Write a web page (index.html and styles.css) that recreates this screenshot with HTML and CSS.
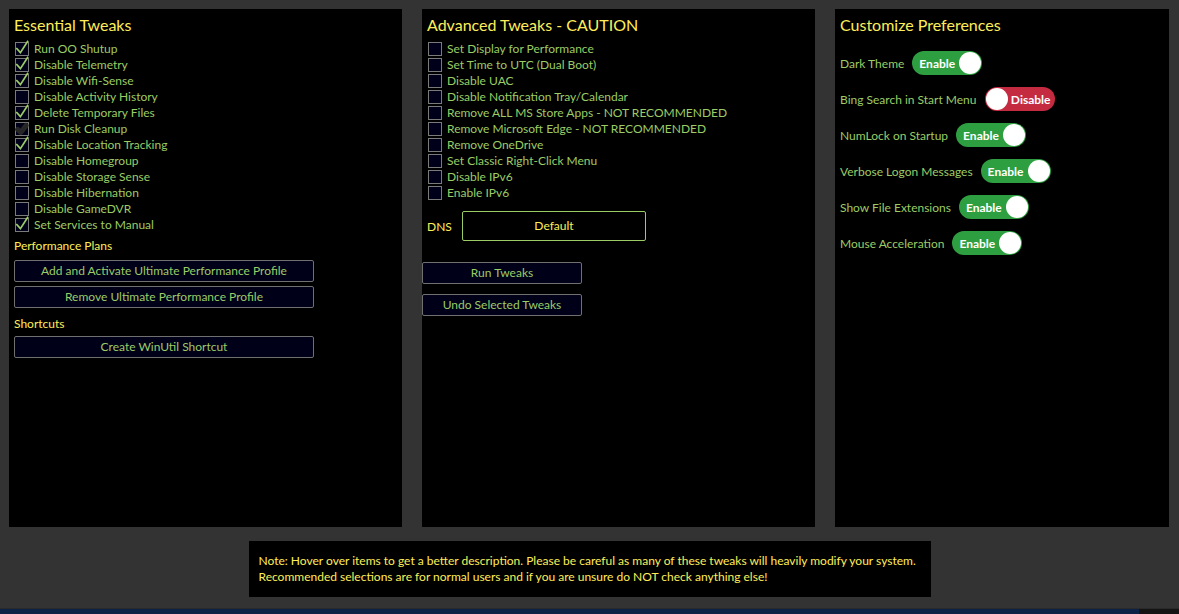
FILE: index.html
```html
<!DOCTYPE html>
<html lang="en">
<head>
<meta charset="utf-8">
<title>WinUtil Tweaks</title>
<link rel="stylesheet" href="styles.css">
</head>
<body>
<div class="app">
  <main class="panels">
    <section class="panel">
      <h2 class="title">Essential Tweaks</h2>
      <ul class="checks">
        <li class="check"><span class="box"><svg class="mark" viewBox="0 0 14 14"><path d="M1.8 6.6 L5.4 10.6 L12.6 -0.6"/></svg></span>Run OO Shutup</li>
        <li class="check"><span class="box"><svg class="mark" viewBox="0 0 14 14"><path d="M1.8 6.6 L5.4 10.6 L12.6 -0.6"/></svg></span>Disable Telemetry</li>
        <li class="check"><span class="box"><svg class="mark" viewBox="0 0 14 14"><path d="M1.8 6.6 L5.4 10.6 L12.6 -0.6"/></svg></span>Disable Wifi-Sense</li>
        <li class="check"><span class="box"></span>Disable Activity History</li>
        <li class="check"><span class="box"><svg class="mark" viewBox="0 0 14 14"><path d="M1.8 6.6 L5.4 10.6 L12.6 -0.6"/></svg></span>Delete Temporary Files</li>
        <li class="check"><span class="box"><svg class="mark dim" viewBox="0 0 14 14"><path d="M2.6 7.4 L5.8 10.4 L11.2 3.4"/></svg></span>Run Disk Cleanup</li>
        <li class="check"><span class="box"><svg class="mark" viewBox="0 0 14 14"><path d="M1.8 6.6 L5.4 10.6 L12.6 -0.6"/></svg></span>Disable Location Tracking</li>
        <li class="check"><span class="box"></span>Disable Homegroup</li>
        <li class="check"><span class="box"></span>Disable Storage Sense</li>
        <li class="check"><span class="box"></span>Disable Hibernation</li>
        <li class="check"><span class="box"></span>Disable GameDVR</li>
        <li class="check"><span class="box"><svg class="mark" viewBox="0 0 14 14"><path d="M1.8 6.6 L5.4 10.6 L12.6 -0.6"/></svg></span>Set Services to Manual</li>
      </ul>
      <h3 class="label plans">Performance Plans</h3>
      <button class="btn wide first">Add and Activate Ultimate Performance Profile</button>
      <button class="btn wide">Remove Ultimate Performance Profile</button>
      <h3 class="label shortcuts">Shortcuts</h3>
      <button class="btn wide first">Create WinUtil Shortcut</button>
    </section>

    <section class="panel">
      <h2 class="title">Advanced Tweaks - CAUTION</h2>
      <ul class="checks">
        <li class="check"><span class="box"></span>Set Display for Performance</li>
        <li class="check"><span class="box"></span>Set Time to UTC (Dual Boot)</li>
        <li class="check"><span class="box"></span>Disable UAC</li>
        <li class="check"><span class="box"></span>Disable Notification Tray/Calendar</li>
        <li class="check"><span class="box"></span>Remove ALL MS Store Apps - NOT RECOMMENDED</li>
        <li class="check"><span class="box"></span>Remove Microsoft Edge - NOT RECOMMENDED</li>
        <li class="check"><span class="box"></span>Remove OneDrive</li>
        <li class="check"><span class="box"></span>Set Classic Right-Click Menu</li>
        <li class="check"><span class="box"></span>Disable IPv6</li>
        <li class="check"><span class="box"></span>Enable IPv6</li>
      </ul>
      <div class="dns">
        <span class="dns-label">DNS</span>
        <div class="combo">Default</div>
      </div>
      <div class="actions">
        <button class="btn small">Run Tweaks</button>
        <button class="btn small">Undo Selected Tweaks</button>
      </div>
    </section>

    <section class="panel">
      <h2 class="title">Customize Preferences</h2>
      <ul class="prefs">
        <li class="pref">Dark Theme<span class="toggle on">Enable<span class="knob"></span></span></li>
        <li class="pref">Bing Search in Start Menu<span class="toggle off"><span class="knob"></span>Disable</span></li>
        <li class="pref">NumLock on Startup<span class="toggle on">Enable<span class="knob"></span></span></li>
        <li class="pref">Verbose Logon Messages<span class="toggle on">Enable<span class="knob"></span></span></li>
        <li class="pref">Show File Extensions<span class="toggle on">Enable<span class="knob"></span></span></li>
        <li class="pref">Mouse Acceleration<span class="toggle on">Enable<span class="knob"></span></span></li>
      </ul>
    </section>
  </main>

  <footer class="foot">
    <p class="note">Note: Hover over items to get a better description. Please be careful as many of these tweaks will heavily modify your system.<br>Recommended selections are for normal users and if you are unsure do NOT check anything else!</p>
  </footer>

  <div class="taskbar"><span class="tb-blue"></span><span class="tb-dark"></span></div>
</div>
</body>
</html>
```

FILE: styles.css
```css
* { box-sizing: border-box; }

html, body {
  margin: 0;
  padding: 0;
  background: #333333;
}

body {
  font-family: Lato, "Open Sans", sans-serif;
  font-size: 12px;
  color: #9ccc65;
}

.app {
  width: 1179px;
  height: 614px;
  display: flex;
  flex-direction: column;
  overflow: hidden;
}

.panels {
  display: grid;
  grid-template-columns: 393px 393px 334px;
  column-gap: 20px;
  padding: 9px 0 0 9px;
  height: 527px;
}

.panel {
  background: #000000;
  padding: 5px 5px 0 5px;
  display: flex;
  flex-direction: column;
  align-items: flex-start;
}

.title {
  margin: 0 0 5px 0;
  font-size: 16px;
  font-weight: normal;
  line-height: 22px;
  color: #ffee58;
}

.checks, .prefs {
  list-style: none;
  margin: 0;
  padding: 0;
}

.check {
  display: flex;
  align-items: center;
  height: 16px;
  line-height: 16px;
  white-space: nowrap;
  gap: 5px;
}

.box {
  position: relative;
  width: 14px;
  height: 14px;
  margin-left: 1px;
  border: 1px solid #7a7a7a;
  background: #00001a;
  flex: none;
}

.mark {
  position: absolute;
  left: -1px;
  top: -1px;
  width: 14px;
  height: 14px;
  overflow: visible;
}

.mark path {
  fill: none;
  stroke: #9ccc65;
  stroke-width: 1.7;
  stroke-linecap: square;
  stroke-linejoin: miter;
}

.mark.dim path {
  stroke: #262626;
  stroke-width: 5;
  stroke-linecap: round;
  stroke-linejoin: round;
}

.label {
  margin: 0;
  font-size: 12px;
  font-weight: normal;
  line-height: 16px;
  color: #ffee58;
}

.plans { margin-top: 5px; }
.shortcuts { margin-top: 8px; }

.btn {
  display: block;
  height: 22px;
  padding: 0;
  border: 1px solid #707070;
  border-radius: 2px;
  background: #000019;
  color: #9ccc65;
  font-family: inherit;
  font-size: 12px;
  line-height: 20px;
  text-align: center;
}

.btn.wide {
  width: 300px;
  margin-top: 4px;
}

.btn.wide.first { margin-top: 6px; }
.shortcuts + .btn.wide.first { margin-top: 4px; }

.dns {
  display: flex;
  align-items: center;
  margin-top: 10px;
}

.dns-label {
  width: 35px;
  color: #ffee58;
}

.combo {
  width: 184px;
  height: 30px;
  border: 1px solid #9ccc65;
  border-radius: 2px;
  background: #000000;
  color: #ffee58;
  line-height: 28px;
  text-align: center;
}

.actions {
  display: flex;
  flex-direction: column;
  gap: 10px;
  margin: 21px 0 0 -5px;
}

.btn.small { width: 160px; }

.prefs {
  margin-top: 10px;
  display: flex;
  flex-direction: column;
  gap: 12px;
}

.pref {
  display: flex;
  align-items: center;
  height: 24px;
  gap: 8px;
  white-space: nowrap;
}

.toggle {
  display: flex;
  align-items: center;
  justify-content: space-between;
  width: 70px;
  height: 24px;
  border-radius: 12px;
  color: #ffffff;
  font-weight: bold;
  font-size: 12px;
}

.toggle.on {
  background: #2e9f40;
  padding: 0 1px 0 7px;
}

.toggle.off {
  background: #c42a40;
  padding: 0 4px 0 1px;
}

.knob {
  width: 22px;
  height: 22px;
  border-radius: 50%;
  background: #ffffff;
}

.foot {
  flex: 1;
  display: flex;
  justify-content: center;
  align-items: flex-start;
  padding-top: 14px;
}

.note {
  margin: 0;
  width: 682px;
  height: 56px;
  padding: 12px 10px 0 10px;
  background: #000000;
  color: #ffee58;
  line-height: 16px;
  white-space: nowrap;
}

.taskbar {
  height: 6px;
  display: flex;
  border-top: 1px solid #2a2a2a;
}

.tb-blue {
  width: 1139px;
  background: #0c2347;
}

.tb-dark {
  flex: 1;
  background: #141414;
}
```
